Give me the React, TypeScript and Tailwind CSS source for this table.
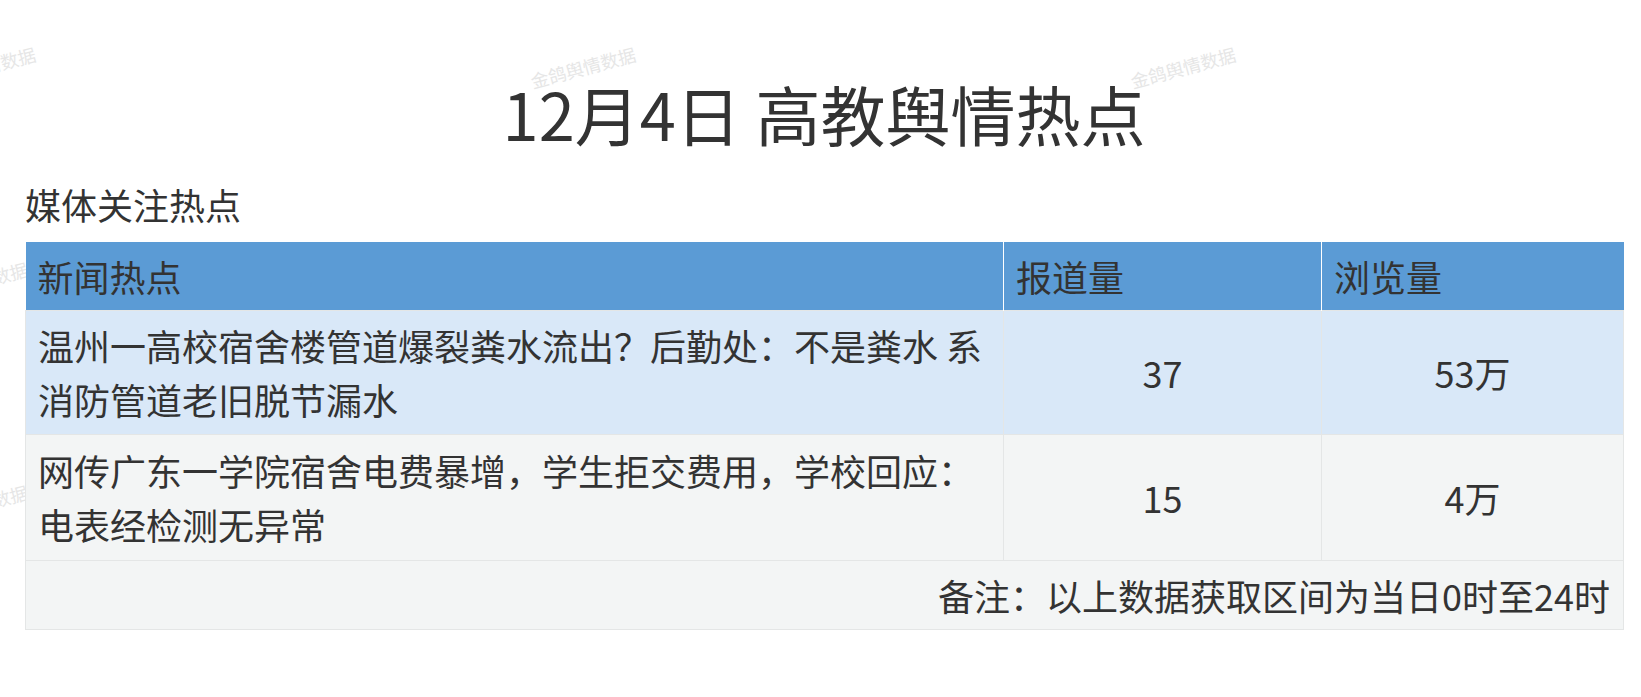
import React from 'react';

// Watermark positions (centre points) — only the ones not hidden under the table
const watermarks = [
    { x: -17, y: 67 },
    { x: 583, y: 67 },
    { x: 1183, y: 67 },
    { x: -25, y: 282 },
    { x: -25, y: 505 },
];

const rows = [
    {
        id: 1,
        lines: ['温州一高校宿舍楼管道爆裂粪水流出？后勤处：不是粪水 系', '消防管道老旧脱节漏水'],
        reports: '37',
        views: '53万',
        bg: 'bg-[#d9e8f8]',
        h: 'h-[124px]',
    },
    {
        id: 2,
        lines: ['网传广东一学院宿舍电费暴增，学生拒交费用，学校回应：', '电表经检测无异常'],
        reports: '15',
        views: '4万',
        bg: 'bg-[#f3f5f5]',
        h: 'h-[126px]',
    },
];

export default function App() {
    return (
        <div className="relative min-h-[697px] overflow-hidden bg-white font-['Noto_Sans_CJK_SC','Microsoft_YaHei',sans-serif] text-[#333]">
            {/* watermark layer */}
            {watermarks.map((w, i) => (
                <span
                    key={i}
                    className="pointer-events-none absolute -translate-x-1/2 -translate-y-1/2 -rotate-[15deg] whitespace-nowrap text-[18px] leading-none text-[#e6e6e6]"
                    style={{ left: w.x, top: w.y }}
                >
                    金鸽舆情数据
                </span>
            ))}

            <div className="relative pl-[25px] pt-[73px]">
                <h1 className="w-[1598px] text-center text-[65px] leading-[80px] font-normal">
                    12月4日 高教舆情热点
                </h1>
                <div className="mt-[24px] text-[36px] leading-[54px]">媒体关注热点</div>

                <table className="mt-[11px] w-[1598px] table-fixed border-collapse text-[36px] leading-[54px]">
                    <colgroup>
                        <col className="w-[978px]" />
                        <col className="w-[318px]" />
                        <col className="w-[302px]" />
                    </colgroup>
                    <thead>
                        <tr className="h-[68px] bg-[#5b9bd5]">
                            <th className="border-r border-white px-[12px] text-left font-normal">新闻热点</th>
                            <th className="border-r border-white px-[12px] text-left font-normal">报道量</th>
                            <th className="px-[12px] text-left font-normal">浏览量</th>
                        </tr>
                    </thead>
                    <tbody>
                        {rows.map((r) => (
                            <tr key={r.id} className={`${r.h} ${r.bg}`}>
                                <td className="border border-[#e4e6e6] px-[12px] align-middle whitespace-nowrap">
                                    {r.lines[0]}
                                    <br />
                                    {r.lines[1]}
                                </td>
                                <td className="border border-[#e4e6e6] px-[12px] text-center align-middle">{r.reports}</td>
                                <td className="border border-[#e4e6e6] px-[12px] text-center align-middle">{r.views}</td>
                            </tr>
                        ))}
                        <tr className="h-[69px] bg-[#f3f5f5]">
                            <td colSpan={3} className="border border-[#e4e6e6] px-[13px] text-right">
                                备注：以上数据获取区间为当日0时至24时
                            </td>
                        </tr>
                    </tbody>
                </table>
            </div>
        </div>
    );
}
